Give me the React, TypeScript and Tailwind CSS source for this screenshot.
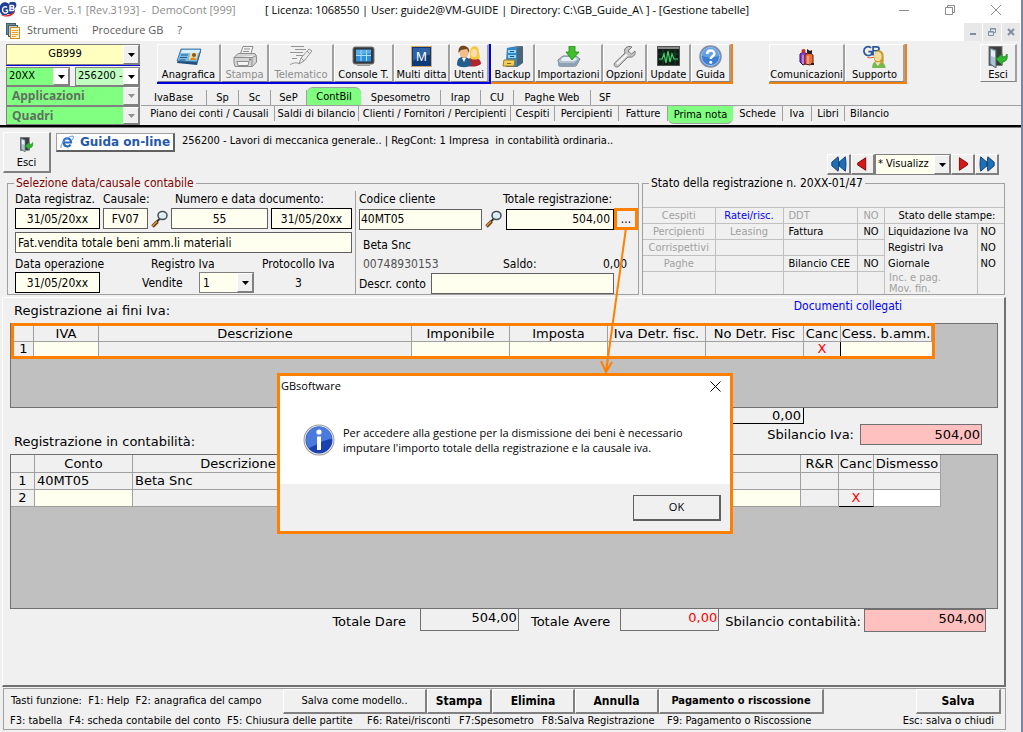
import type { ReactNode } from 'react'
import clsx from 'clsx'

const TAHOMA = "font-['DejaVu_Sans_Condensed','DejaVu_Sans',sans-serif]"
const VERDANA = "font-['DejaVu_Sans',sans-serif]"
const SEGOE = "font-['Open_Sans','Noto_Sans',sans-serif]"

const RAISED = 'border-t border-l border-r-2 border-b-2 border-t-white border-l-white border-r-[#808080] border-b-[#808080] bg-[#f0f0f0]'

/* ---------- icons ---------- */

function GbLogo() {
  return (
    <svg width="17" height="18" viewBox="0 0 17 18" aria-hidden="true">
      <path d="M0 5c1-4 6-5 9-2l1-2h4c3 0 3 5 1 6 1 5-3 7-7 6-4 3-8 0-8-3z" fill="#1f3f94" />
      <path d="M7 6.500C5.500 4.800 2.500 6 2.500 9s3 4 5 2V9.200H5.500M10 9.500V4.500h2.500c2 0 1.500 2.500 0 2.500h-2 2.200c2 0 1.800 2.500 0 2.500z" fill="none" stroke="#fff" strokeWidth="1.400" />
      <path d="M0 13c4 3 11 1 15-3-1 5-10 8-15 3z" fill="#e02020" />
    </svg>
  )
}

function PagesIcon() {
  return (
    <svg width="14" height="16" viewBox="0 0 14 16" aria-hidden="true">
      <rect x="0.500" y="0.500" width="9" height="11" fill="#6f8b92" stroke="#40606a" />
      <rect x="2.500" y="2.500" width="9" height="11" fill="#b8d0d0" stroke="#40606a" />
      <rect x="4.500" y="4.500" width="9" height="11" fill="#fff3d0" stroke="#d08a20" />
      <path d="M6 7.500h6M6 9.500h6M6 11.500h6M6 13.500h4" stroke="#e0a040" />
    </svg>
  )
}

function CardIcon() {
  return (
    <svg width="26" height="22" viewBox="0 0 26 22" aria-hidden="true">
      <path d="M5 5h20l-4 14L1 17z" fill="#1f4f7c" />
      <path d="M5 3h20l-4 13-20-1z" fill="#7fbce4" stroke="#2f6594" strokeWidth="0.800" />
      <path d="M6 4h18l-1 3H5z" fill="#d8f0fc" />
      <path d="M5 9h7M4 11.500h7M3.500 14h6" stroke="#1f5c92" />
      <path d="M14 7h8l-2 7h-7z" fill="#f0dca0" />
      <circle cx="18" cy="9" r="2" fill="#8a5418" />
      <path d="M14 14c0-3 6-3.500 6 0z" fill="#d88a20" />
    </svg>
  )
}

function PrinterIcon() {
  return (
    <svg width="26" height="23" viewBox="0 0 26 23" fill="#f4f4f4" stroke="#8c8c8c" aria-hidden="true">
      <path d="M8 10 11 1.500h10L18.500 10z" />
      <path d="M12 4h6M11 6.500h6" />
      <path d="M2 12.500 6 8.500h17l1.500 3V17l-4 4.500H3L2 18z" fill="#d4d4d4" />
      <path d="M2 12.500h18l4.500-2M20 12.500v8.500" />
      <path d="M5 16.500h12l-1 4H6z" />
      <path d="M17 14.500h2" strokeWidth="2" />
    </svg>
  )
}

function PenIcon() {
  return (
    <svg width="26" height="23" viewBox="0 0 26 23" fill="none" stroke="#949494" aria-hidden="true">
      <path d="M3 1.500h13M7 4.500h11M2 7.500h13M8 10.500h7M4 13.500h5M2 19.500c5-2 6-2 9-1" />
      <path d="m11 19 2-6 8-9 3 2-8 10z" fill="#eee" />
      <path d="M13 13l3 3M19 6l3 3" />
    </svg>
  )
}

function ConsoleIcon() {
  return (
    <svg width="24" height="21" viewBox="0 0 24 21" aria-hidden="true">
      <rect x="1" y="1" width="21" height="17" rx="2" fill="#34393f" stroke="#777" />
      <rect x="4" y="3.500" width="15" height="12" fill="#2f8ed8" />
      <path d="M4 9.500h15M9 4v11M14.500 4v11" stroke="#a8e4ff" />
      <path d="M4 4h15v3L4 9z" fill="#8ccdf5" opacity="0.500" />
      <path d="M5 19.500h13" stroke="#999" />
    </svg>
  )
}

function MultiIcon() {
  return (
    <svg width="22" height="22" viewBox="0 0 22 22" aria-hidden="true">
      <rect x="0.500" y="0.500" width="20" height="20" fill="#0d3a78" stroke="#d8a868" />
      <path d="M2 2h17v7C13 9 7 11 2 15z" fill="#3c74b8" opacity="0.700" />
      <text x="10.500" y="15" textAnchor="middle" fontFamily="Liberation Sans, sans-serif" fontSize="13" fill="#fff">M</text>
    </svg>
  )
}

function UsersIcon() {
  return (
    <svg width="26" height="23" viewBox="0 0 26 23" aria-hidden="true">
      <path d="M12 21c0-8 2-9 5-9s8 2 8 7c-4 3-9 3-13 2z" fill="#b02430" />
      <path d="M14 7c0-7 9-8 9 0l1 6c-3 2-8 2-10 0z" fill="#f0cc40" />
      <ellipse cx="18" cy="8" rx="3" ry="4" fill="#ffdcae" />
      <path d="M1 20c0-6 2-8 6-8s8 1 8 8c-3 3-11 3-14 0z" fill="#235e8e" />
      <ellipse cx="8" cy="8" rx="4.500" ry="5" fill="#f2bd86" />
      <path d="M2.500 8C2 1 6 0 9 1s5 3 4 7l-2-4-6 1z" fill="#74461c" />
      <path d="m6 13 2 4 2-4z" fill="#fff" />
    </svg>
  )
}

function BackupIcon() {
  return (
    <svg width="22" height="22" viewBox="0 0 22 22" aria-hidden="true">
      <path d="M5 2 16 0h4v17l-5 4H4z" fill="#5a7386" />
      <path d="M15 3v18l6-4V0z" fill="#4c6478" />
      <path d="M5 2l10-1v19H4z" fill="#2f88cc" />
      <path d="M6 4h8v3H6zM6 9h8v3H6z" fill="#9ad4f8" />
      <path d="M8 5.500h4M8 10.500h4" stroke="#145484" />
      <path d="M2 14h11l-1 6H1z" fill="#f4cf5c" stroke="#9e7a20" />
      <path d="M5 17.500h4" stroke="#86620e" />
    </svg>
  )
}

function ImportIcon() {
  return (
    <svg width="24" height="22" viewBox="0 0 24 22" aria-hidden="true">
      <path d="m1 14 5-4h13l4 3-4 7H2z" fill="#b5c3d1" stroke="#6e8396" />
      <path d="m4 13 3-2h10l3 2-3 2H5z" fill="#e9eff5" />
      <path d="M1 14v4l2 3h14l5-5v-3l-5 4H3z" fill="#8ea2b4" />
      <path d="M12 0h6v6h4l-7 8-6-8h3z" fill="#3fbf2a" stroke="#268417" strokeWidth="0.800" />
    </svg>
  )
}

function WrenchIcon() {
  return (
    <svg width="24" height="22" viewBox="0 0 24 22" aria-hidden="true">
      <path d="M19 1c-5-2-9 2-7 6L1.500 17c-1.500 3 1.500 5 4 3.500L15 11c5 1 8-2 7-6l-3.500 3-3.500-3z" fill="#c4c4c4" stroke="#7a7a7a" />
      <path d="M4 18 14 8.500" stroke="#fafafa" strokeWidth="2" />
    </svg>
  )
}

function UpdateIcon() {
  return (
    <svg width="24" height="21" viewBox="0 0 24 21" aria-hidden="true">
      <rect x="0.500" y="0.500" width="22" height="19" fill="#101c14" stroke="#555" />
      <path d="M1 2h21" stroke="#888" strokeWidth="2" />
      <path d="M1 8h22M1 14h22M6 3v17M12 3v17M18 3v17" stroke="#1b5230" strokeWidth="0.700" />
      <path d="M2 13h3l2-5 2 9 2-12 2 11 2-8 2 5h4" fill="none" stroke="#43d068" strokeWidth="1.200" />
    </svg>
  )
}

function HelpIcon() {
  return (
    <svg width="23" height="23" viewBox="0 0 24 24" aria-hidden="true">
      <circle cx="12" cy="12" r="11" fill="#3c7fd0" stroke="#868ea0" strokeWidth="1.500" />
      <circle cx="12" cy="12" r="9.500" fill="none" stroke="#a8ccf4" />
      <path d="M3 11a9 8.500 0 0 1 18 0c-5 3-12 3-18 0z" fill="#78aee8" opacity="0.700" />
      <path d="M8.500 9.500c0-5 7.500-5 7.500-.5 0 3-3.700 2.500-3.700 5.500" fill="none" stroke="#fff" strokeWidth="2.600" />
      <circle cx="12.300" cy="18" r="1.600" fill="#fff" />
    </svg>
  )
}

function PeopleIcon() {
  return (
    <svg width="16" height="18" viewBox="0 0 16 18" aria-hidden="true">
      <path d="M1 6c2-2 5-2 7 0v9l-4 2-3-3z" fill="#8a3fd0" stroke="#301050" />
      <path d="M6 7c2-2 6-2 8 0v8l-3 2-5-1z" fill="#f07030" stroke="#601808" />
      <path d="M4 7v9M9 8v8" stroke="#f0c0ff" />
      <circle cx="4.500" cy="3" r="2" fill="#d02828" />
      <path d="M8 5V1l3 2 2-1v4z" fill="#202020" />
      <path d="M12 16h3" stroke="#222" strokeWidth="2" />
    </svg>
  )
}

function SupportIcon() {
  return (
    <svg width="26" height="23" viewBox="0 0 26 24" aria-hidden="true">
      <path d="M9 3C5 0 1 3 1.500 7s5 5 8 3V7H6M11 11V2h4c3 0 3 4 0 4h-4 5" fill="none" stroke="#2b5a9a" strokeWidth="1.800" />
      <path d="M5 13c3 1 7 0 9-1" stroke="#e84820" fill="none" />
      <path d="M10 24c0-5 2-7 6-7s8 2 8 7z" fill="#78b850" />
      <path d="M12 15c-1-12 10-12 10-3v6c-3 3-8 2-10-3z" fill="#c89a30" />
      <ellipse cx="16" cy="12" rx="4" ry="5" fill="#f5dc98" />
      <path d="m13 18 3 4 3-4z" fill="#f3e2b8" />
    </svg>
  )
}

function ExitIcon({ size }: { size: number }) {
  return (
    <svg width={size} height={size} viewBox="0 0 20 22" aria-hidden="true">
      <rect x="1" y="0.500" width="13" height="19" fill="#3c3c3c" stroke="#777" />
      <path d="M2 2 8 4v18l-6-4z" fill="#a8c4d4" stroke="#506068" />
      <path d="M3 4l4 1.500v6L3 10z" fill="#e2eff5" />
      <path d="m8 13 6-5v3c3 0 4-1 5-3 1 5-1 8-5 8v3z" fill="#30b830" stroke="#18801c" strokeWidth="0.800" />
    </svg>
  )
}

function MagnifierIcon() {
  return (
    <svg width="17" height="18" viewBox="0 0 17 18" aria-hidden="true">
      <path d="m1.500 16.500 5-5" stroke="#6a3c10" strokeWidth="3.500" />
      <path d="m1.500 16 5-5" stroke="#d89848" strokeWidth="1.500" />
      <path d="m6 11.500 2.500-2.500" stroke="#333" strokeWidth="2" />
      <ellipse cx="11.500" cy="5.500" rx="4.500" ry="4" fill="#d9ebf3" stroke="#454d52" strokeWidth="1.500" />
      <path d="M9.500 5c0-1.500 1-2 2.500-2" fill="none" stroke="#fff" />
    </svg>
  )
}

function IeIcon() {
  return (
    <svg width="14" height="14" viewBox="0 0 14 14" fill="none" aria-hidden="true">
      <path d="M3.500 7.500h7.500C11 2 4 2 3.500 7c0 5 5.500 5.500 7 2.500" stroke="#2b6cc0" strokeWidth="2.200" />
      <path d="M1 13c-1-4 6-12 12-12 1 1 0 3-1 4" stroke="#5c9ae0" />
    </svg>
  )
}

function InfoIcon() {
  return (
    <svg width="32" height="32" viewBox="0 0 32 32" aria-hidden="true">
      <circle cx="16" cy="16" r="15.500" fill="#9a9a9a" />
      <circle cx="16" cy="16" r="14.500" fill="#ececec" />
      <circle cx="16" cy="16" r="13.500" fill="#1941b0" />
      <path d="M3 16a13 13 0 0 1 26-1c-8 0-17 7-23 9-2-2-3-5-3-8z" fill="#4b7ade" />
      <circle cx="16" cy="8" r="2.600" fill="#fff" />
      <path d="M14 12.500h4V26h-4z" fill="#fff" />
    </svg>
  )
}

const NAV_PATHS = {
  first: 'M9 2c1 5 1 11 0 16l-7-6v-4zM17 2c1 5 1 11 0 16l-7-6v-4z',
  prev: 'M13 3v14l-9-6v-2z',
  next: 'M6 3v14l9-6v-2z',
  last: 'M3 2c-1 5-1 11 0 16l7-6v-4zM11 2c-1 5-1 11 0 16l7-6v-4z',
} as const

function NavButton({ kind, label }: { kind: keyof typeof NAV_PATHS; label: string }) {
  const blue = kind === 'first' || kind === 'last'
  return (
    <button aria-label={label} className={clsx('flex h-[21px] w-6 items-center justify-center', RAISED)}>
      <svg width="20" height="18" viewBox="0 0 20 20" aria-hidden="true">
        <path
          d={NAV_PATHS[kind]}
          fill={blue ? '#1d6fb8' : '#d81818'}
          stroke={blue ? '#0c3560' : '#700808'}
        />
      </svg>
    </button>
  )
}

/* ---------- shared controls ---------- */

function Combo({
  label,
  value,
  className,
  arrowClass = 'bg-[#f0f0f0] text-black',
  selectClass,
}: {
  label: string
  value: string
  className?: string
  arrowClass?: string
  selectClass?: string
}) {
  return (
    <div className={clsx('flex border border-[#808080]', className)}>
      <select
        aria-label={label}
        defaultValue={value}
        className={clsx('min-w-0 flex-1 appearance-none overflow-hidden bg-transparent outline-none', selectClass)}
      >
        <option>{value}</option>
      </select>
      <span
        className={clsx(
          'pointer-events-none flex w-4 flex-none items-center justify-center border-t border-l border-r border-b border-t-white border-l-white border-r-[#808080] border-b-[#808080]',
          arrowClass
        )}
      >
        <svg width="7" height="4" viewBox="0 0 7 4" fill="currentColor" aria-hidden="true">
          <path d="M0 0h7L3.500 4z" />
        </svg>
      </span>
    </div>
  )
}

function Field({ label, value, className }: { label: string; value: string; className?: string }) {
  return (
    <input
      aria-label={label}
      defaultValue={value}
      className={clsx('h-[21px] min-w-0 border px-[2px] outline-none', className)}
    />
  )
}

function ToolButton({
  icon,
  label,
  width,
  disabled,
}: {
  icon: ReactNode
  label: string
  width: string
  disabled?: boolean
}) {
  return (
    <button
      disabled={disabled}
      className={clsx(
        'flex h-[38px] flex-none flex-col items-center justify-between border-t border-r-2 border-b border-l border-t-white border-l-white border-r-[#a0a0a0] border-b-[#808080] whitespace-nowrap',
        width,
        disabled && 'text-[#8c8c8c]'
      )}
    >
      <span className="flex h-[23px] items-center">{icon}</span>
      <span className="leading-[13px]">{label}</span>
    </button>
  )
}

function Tab({ label, width, active }: { label: string; width: string; active?: 'top' | 'bottom' }) {
  return (
    <button
      className={clsx(
        'flex flex-none items-center justify-center whitespace-nowrap',
        width,
        active ? 'h-[18px] bg-[#80ff80]' : 'h-[15px] border-r border-[#a0a0a0] pt-px',
        active === 'top' && 'rounded-t-md border-t border-[#a0a0a0] pt-px',
        active === 'bottom' && 'rounded-b-md border-b border-[#a0a0a0] pt-px'
      )}
    >
      {label}
    </button>
  )
}

/* ---------- window chrome ---------- */

function TitleBar() {
  return (
    <header className={clsx('bg-white text-[11px] text-[#8c8c8c]', SEGOE)}>
      <div className="flex h-5 items-center">
        <GbLogo />
        <span className="ml-[3px] w-[245px] whitespace-nowrap">GB - Ver. 5.1 [Rev.3193] -&nbsp; DemoCont [999]</span>
        <span className="whitespace-nowrap text-black">
          [ Licenza: 1068550 | User: guide2@VM-GUIDE | Directory: C:\GB_Guide_A\ ] - [Gestione tabelle]
        </span>
        <div className="mr-5 ml-auto flex items-center gap-9 text-[#8c8c8c]">
          <button aria-label="Riduci a icona">
            <svg width="10" height="10" viewBox="0 0 10 10" stroke="currentColor"><path d="M0 5.500h10" /></svg>
          </button>
          <button aria-label="Ripristina">
            <svg width="10" height="10" viewBox="0 0 10 10" fill="none" stroke="currentColor">
              <path d="M0.500 2.500h7v7h-7zM2.500 2V0.500h7v7H8" />
            </svg>
          </button>
          <button aria-label="Chiudi">
            <svg width="10" height="10" viewBox="0 0 10 10" stroke="currentColor"><path d="m0 0 10 10M10 0 0 10" /></svg>
          </button>
        </div>
      </div>
      <nav className="flex h-[21px] items-center pl-[6px] text-[#5a5a5a]">
        <PagesIcon />
        <button className="ml-[7px]">Strumenti</button>
        <button className="ml-[14px]">Procedure GB</button>
        <button className="ml-[14px]">?</button>
        <div className="mr-px ml-auto flex gap-px self-end text-[#7f8fa3]">
          <button aria-label="Riduci scheda" className="flex h-[18px] w-[18px] items-center justify-center bg-[#e8e8e8]">
            <svg width="8" height="8" viewBox="0 0 8 8"><path d="M1 6h6" stroke="currentColor" strokeWidth="2" /></svg>
          </button>
          <button aria-label="Ripristina scheda" className="flex h-[18px] w-[18px] items-center justify-center bg-[#e8e8e8]">
            <svg width="8" height="8" viewBox="0 0 8 8" fill="none" stroke="currentColor">
              <path d="M0.500 3.500h5v4h-5zM2.500 3V0.500h5v4H6M2 1h6M0 4h6" />
            </svg>
          </button>
          <button aria-label="Chiudi scheda" className="flex h-[18px] w-[18px] items-center justify-center bg-[#e8e8e8]">
            <svg width="8" height="8" viewBox="0 0 8 8"><path d="m1 1 6 6M7 1 1 7" stroke="currentColor" strokeWidth="2" /></svg>
          </button>
        </div>
      </nav>
    </header>
  )
}

function Toolbar() {
  return (
    <div className="flex h-[86px] border-b-2 border-black bg-[#f0f0f0] text-[11px]">
      <div className="flex w-[141px] flex-none flex-col pt-[3px] pl-[6px]">
        <Combo label="Ditta" value="GB999" className="h-[21px] w-[134px] bg-[#ffffc0]" selectClass="text-center" />
        <div className="mb-px h-px w-[134px] bg-[#0000e0]" />
        <div className="flex h-[19px] gap-[5px]">
          <Combo label="Anno" value="20XX" className="w-[64px] bg-[#80ff80]" arrowClass="bg-white text-black" selectClass="pl-[2px]" />
          <Combo label="Codice" value="256200 -" className="w-[65px] bg-[#c0ffc0]" arrowClass="bg-white text-black" selectClass="pl-[2px]" />
        </div>
        <Combo
          label="Applicazioni"
          value="Applicazioni"
          className={clsx('h-[20px] w-[134px] bg-[#80ff80] text-[12px] font-bold text-[#607060]', SEGOE)}
          arrowClass="bg-[#f0f0f0] text-[#909090]"
          selectClass="pl-[5px] leading-4"
        />
        <Combo
          label="Quadri"
          value="Quadri"
          className={clsx('h-[19px] w-[134px] bg-[#80ff80] text-[12px] font-bold text-[#607060]', SEGOE)}
          arrowClass="bg-[#f0f0f0] text-[#909090]"
          selectClass="pl-[5px] leading-4"
        />
      </div>

      <div className="flex min-w-0 flex-1 flex-col">
        <div className="flex h-[46px] items-start pt-[3px] pl-4">
          <div className="flex border-r-2 border-b-2 border-[#0000e0]">
            <ToolButton icon={<CardIcon />} label="Anagrafica" width="w-[64px]" />
            <ToolButton icon={<PrinterIcon />} label="Stampa" width="w-[48px]" disabled />
            <ToolButton icon={<PenIcon />} label="Telematico" width="w-[65px]" disabled />
            <ToolButton icon={<ConsoleIcon />} label="Console T." width="w-[60px]" />
            <ToolButton icon={<MultiIcon />} label="Multi ditta" width="w-[56px]" />
            <ToolButton icon={<UsersIcon />} label="Utenti" width="w-[39px]" />
          </div>
          <div className="flex border-r-2 border-b-2 border-[#f08010]">
            <ToolButton icon={<BackupIcon />} label="Backup" width="w-[44px]" />
            <ToolButton icon={<ImportIcon />} label="Importazioni" width="w-[68px]" />
            <ToolButton icon={<WrenchIcon />} label="Opzioni" width="w-[44px]" />
            <ToolButton icon={<UpdateIcon />} label="Update" width="w-[44px]" />
            <ToolButton icon={<HelpIcon />} label="Guida" width="w-[40px]" />
          </div>
          <div className="ml-9 flex border-r-2 border-b-2 border-[#f08010]">
            <ToolButton icon={<PeopleIcon />} label="Comunicazioni" width="w-[76px]" />
            <ToolButton icon={<SupportIcon />} label="Supporto" width="w-[60px]" />
          </div>
          <div className="mr-[4px] ml-auto">
            <ToolButton icon={<ExitIcon size={22} />} label="Esci" width="w-[37px]" />
          </div>
        </div>

        <nav className="flex h-[19px] items-end border-b border-[#a0a0a0]">
          <Tab label="IvaBase" width="w-[66px]" />
          <Tab label="Sp" width="w-[32px]" />
          <Tab label="Sc" width="w-[32px]" />
          <Tab label="SeP" width="w-[36px]" />
          <Tab label="ContBil" width="w-[54px]" active="top" />
          <Tab label="Spesometro" width="w-[80px]" />
          <Tab label="Irap" width="w-[40px]" />
          <Tab label="CU" width="w-[33px]" />
          <Tab label="Paghe Web" width="w-[77px]" />
          <button className="h-[15px] w-7 leading-4">SF</button>
        </nav>
        <nav className="flex h-[19px] items-start pl-1">
          <Tab label="Piano dei conti / Causali" width="w-[130px]" />
          <Tab label="Saldi di bilancio" width="w-[84px]" />
          <Tab label="Clienti / Fornitori / Percipienti" width="w-[152px]" />
          <Tab label="Cespiti" width="w-[44px]" />
          <Tab label="Percipienti" width="w-[64px]" />
          <Tab label="Fatture" width="w-[49px]" />
          <Tab label="Prima nota" width="w-[65px]" active="bottom" />
          <Tab label="Schede" width="w-[50px]" />
          <Tab label="Iva" width="w-[29px]" />
          <Tab label="Libri" width="w-[33px]" />
          <button className="h-[15px] w-[49px] leading-4">Bilancio</button>
        </nav>
      </div>
    </div>
  )
}

function ContextBar() {
  return (
    <div className="flex h-[47px] items-start pt-[4px] pl-[3px] text-[11px]">
      <button className={clsx('flex h-[41px] w-12 flex-col items-center justify-between pt-[4px]', RAISED)}>
        <ExitIcon size={15} />
        <span className="leading-4">Esci</span>
      </button>
      <button className="mt-px ml-[5px] flex h-[19px] w-[119px] items-center justify-center gap-[6px] border-t border-r-2 border-b-2 border-l border-[#606060] border-t-[#a0a0a0] border-l-[#a0a0a0] bg-white">
        <IeIcon />
        <span className={clsx('text-[12px] font-bold text-[#2458a8]', VERDANA)}>Guida on-line</span>
      </button>
      <span className="ml-[7px] leading-[18px] whitespace-nowrap">
        256200 - Lavori di meccanica generale.. | RegCont: 1 Impresa&nbsp; in contabilità ordinaria..
      </span>
      <div className="mr-[22px] ml-auto flex self-end">
        <NavButton kind="first" label="Prima registrazione" />
        <NavButton kind="prev" label="Registrazione precedente" />
        <Combo label="Visualizza" value="* Visualizz" className="h-[21px] w-[76px] bg-[#fffff0]" selectClass="pl-[2px]" />
        <NavButton kind="next" label="Registrazione successiva" />
        <NavButton kind="last" label="Ultima registrazione" />
      </div>
    </div>
  )
}

/* ---------- registration header ---------- */

const CREAM = 'bg-[#fffff0] border-[#606060]'
const CREAM_DARK = 'bg-[#fffff0] border-black'

function SelectionBox() {
  return (
    <fieldset className="w-[631px] flex-none border border-[#a0a0a0]">
      <legend className="ml-[6px] px-[2px] leading-4 text-[#800000]">Selezione data/causale contabile</legend>
      <div className="flex h-[103px]">
        <div className="w-[347px] flex-none pl-[7px]">
          <div className="grid grid-cols-[85px_45px_17px_97px_81px] gap-x-[3px] whitespace-nowrap">
            <span className="h-[17px] leading-4">Data registraz.</span>
            <span className="col-span-2 h-[17px] leading-4">Causale:</span>
            <span className="col-span-2 h-[17px] pl-1 leading-4">Numero e data documento:</span>
            <Field label="Data registrazione" value="31/05/20xx" className={clsx('text-center', CREAM_DARK)} />
            <Field label="Causale" value="FV07" className={clsx('text-center', CREAM)} />
            <button aria-label="Cerca causale" className="self-center"><MagnifierIcon /></button>
            <Field label="Numero documento" value="55" className={clsx('text-center', CREAM)} />
            <Field label="Data documento" value="31/05/20xx" className={clsx('text-center', CREAM_DARK)} />
          </div>
          <Field label="Descrizione causale" value="Fat.vendita totale beni amm.li materiali" className={clsx('mt-[3px] block w-[337px]', CREAM)} />
          <div className="mt-[3px] flex h-4 leading-4 whitespace-nowrap">
            <label htmlFor="data-op" className="w-[136px]">Data operazione</label>
            <span className="w-[111px]">Registro Iva</span>
            <span>Protocollo Iva</span>
          </div>
          <div className="flex items-center">
            <input id="data-op" defaultValue="31/05/20xx" className={clsx('h-[21px] w-[85px] border text-center', CREAM_DARK)} />
            <span className="ml-[42px] w-[57px]">Vendite</span>
            <Combo label="Registro Iva" value="1" className="h-[21px] w-[55px] bg-[#fffff0]" selectClass="pl-[3px]" />
            <span className="ml-[41px]">3</span>
          </div>
        </div>

        <div className="flex-1 border-l border-[#a0a0a0] pl-[3px]">
          <div className="flex h-[17px] leading-4 whitespace-nowrap">
            <label htmlFor="cliente" className="w-[144px]">Codice cliente</label>
            <label htmlFor="totale">Totale registrazione:</label>
          </div>
          <div className="flex items-center">
            <input id="cliente" defaultValue="40MT05" className={clsx('h-[21px] w-[123px] border px-px', CREAM)} />
            <button aria-label="Cerca cliente" className="mx-[3px] w-[18px]"><MagnifierIcon /></button>
            <input id="totale" defaultValue="504,00" className={clsx('h-[21px] w-[108px] border px-[3px] text-right', CREAM_DARK)} />
            <button aria-label="Dettagli totale" className="h-[22px] w-6 border-3 border-[#ff8000] leading-3">...</button>
          </div>
          <div className="mt-[6px] pl-1 leading-[19px]">Beta Snc</div>
          <div className="flex h-[18px] pr-[11px] pl-1 leading-[18px]">
            <span className="w-[140px] text-[#505050]">00748930153</span>
            <span>Saldo:</span>
            <span className="ml-auto">0,00</span>
          </div>
          <div className="flex items-center">
            <label htmlFor="descr" className="w-[72px] whitespace-nowrap">Descr. conto</label>
            <input id="descr" className={clsx('h-[21px] w-[183px] border', CREAM)} />
          </div>
        </div>
      </div>
    </fieldset>
  )
}

const STATUS_ROWS = [
  ['Cespiti', 'Ratei/risc.', 'DDT', 'NO'],
  ['Percipienti', 'Leasing', 'Fattura', 'NO'],
  ['Corrispettivi', '', '', ''],
  ['Paghe', '', 'Bilancio CEE', 'NO'],
  ['', '', '', ''],
]

function StatusBox() {
  return (
    <fieldset className="min-w-0 flex-1 border border-[#a0a0a0]">
      <legend className="ml-[6px] px-[2px] leading-4">Stato della registrazione n. 20XX-01/47</legend>
      <div className="flex h-[103px] pt-[16px] text-[11px]">
        <table className="h-[87px] flex-1 table-fixed border-collapse leading-[14px] whitespace-nowrap text-[#a0a0a0]">
          <colgroup>
            <col className="w-[72px]" />
            <col className="w-[68px]" />
            <col />
            <col className="w-[27px]" />
          </colgroup>
          <tbody>
            {STATUS_ROWS.map((row, r) => (
              <tr key={r} className={clsx('border-t border-[#c0c0c0]', r < 4 ? 'h-4' : 'h-[22px]')}>
                {row.map((cell, c) => (
                  <td
                    key={c}
                    className={clsx(
                      'border-r border-[#c0c0c0] p-0',
                      c === 2 ? 'pl-[5px] text-left' : 'text-center',
                      c > 1 && (r === 1 || r === 3) && 'text-black',
                      cell === 'Ratei/risc.' && 'text-[#0000ff]'
                    )}
                  >
                    {cell}
                  </td>
                ))}
              </tr>
            ))}
          </tbody>
        </table>
        <table className="h-[87px] w-[119px] flex-none table-fixed border-collapse leading-[14px] whitespace-nowrap">
          <colgroup>
            <col className="w-[92px]" />
            <col />
          </colgroup>
          <tbody>
            <tr className="h-4 border-y border-[#c0c0c0]"><th colSpan={2} className="p-0 pl-[5px] font-normal">Stato delle stampe:</th></tr>
            {['Liquidazione Iva', 'Registri Iva', 'Giornale'].map((name) => (
              <tr key={name} className="h-4">
                <td className="border-r border-[#c0c0c0] p-0 pl-[3px]">{name}</td>
                <td className="p-0 pl-[3px]">NO</td>
              </tr>
            ))}
            {['Inc. e pag.', 'Mov. fin.'].map((name) => (
              <tr key={name} className="h-[11px] leading-[11px] text-[#a0a0a0]">
                <td className="border-r border-[#c0c0c0] p-0 pl-1">{name}</td>
                <td className="p-0" />
              </tr>
            ))}
          </tbody>
        </table>
      </div>
    </fieldset>
  )
}

/* ---------- grids ---------- */

const TH = 'border-r border-b border-[#a0a0a0] p-0 font-normal'
const TD = 'border-r border-b border-[#a0a0a0] p-0'
const IVA_TD = 'border-r border-[#a0a0a0] p-0'

function IvaGrid() {
  return (
    <div className="h-[85px] border border-[#707070] bg-[#c0c0c0]">
      <div className="-mt-px w-[924px] max-w-full border-3 border-[#ff8000] bg-[#f0f0f0]">
        <table className="w-full table-fixed border-separate border-spacing-0 leading-[14px] whitespace-nowrap">
          <colgroup>
            <col className="w-5" />
            <col className="w-[65px]" />
            <col />
            <col className="w-[98px]" />
            <col className="w-[98px]" />
            <col className="w-[98px]" />
            <col className="w-[98px]" />
            <col className="w-[37px]" />
            <col className="w-[91px]" />
          </colgroup>
          <thead>
            <tr className="h-4">
              {['', 'IVA', 'Descrizione', 'Imponibile', 'Imposta', 'Iva Detr. fisc.', 'No Detr. Fisc', 'Canc', 'Cess. b.amm.'].map((h, i) => (
                <th key={i} className={clsx(TH, 'pt-px')}>{h}</th>
              ))}
            </tr>
          </thead>
          <tbody>
            <tr className="h-[14px]">
              <td className={clsx(IVA_TD, 'text-center')}>1</td>
              <td className={clsx(IVA_TD, 'bg-[#fffff0]')} />
              <td className={IVA_TD} />
              <td className={clsx(IVA_TD, 'bg-[#fffff0]')} />
              <td className={clsx(IVA_TD, 'bg-[#fffff0]')} />
              <td className={IVA_TD} />
              <td className={IVA_TD} />
              <td className="border-r border-black p-0 text-center">
                <button className="block w-full leading-[14px] text-[#ff0000]">X</button>
              </td>
              <td className="bg-[#fffff0] p-0" />
            </tr>
          </tbody>
        </table>
      </div>
    </div>
  )
}

function AccountGrid() {
  return (
    <div className="h-[155px] border border-[#707070] bg-[#c0c0c0]">
      <table className="w-[930px] max-w-full table-fixed border-separate border-spacing-0 bg-[#f0f0f0] leading-4 whitespace-nowrap">
        <colgroup>
          <col className="w-6" />
          <col className="w-[98px]" />
          <col className="w-[211px]" />
          <col />
          <col className="w-[98px]" />
          <col className="w-[38px]" />
          <col className="w-[35px]" />
          <col className="w-[67px]" />
        </colgroup>
        <thead>
          <tr className="h-[17px]">
            {['', 'Conto', 'Descrizione', '', '', 'R&R', 'Canc', 'Dismesso'].map((h, i) => (
              <th key={i} className={clsx(TH, 'leading-[17px]')}>{h}</th>
            ))}
          </tr>
        </thead>
        <tbody>
          <tr className="h-[17px]">
            <td className={clsx(TD, 'text-center')}>1</td>
            <td className={clsx(TD, 'pl-[2px]')}>40MT05</td>
            <td className={clsx(TD, 'pl-[2px]')}>Beta Snc</td>
            <td className={TD} />
            <td className={TD} />
            <td className={TD} />
            <td className={TD} />
            <td className={TD} />
          </tr>
          <tr className="h-[17px]">
            <td className={clsx(TD, 'text-center')}>2</td>
            <td className={clsx(TD, 'bg-[#fffff0]')} />
            <td className={TD} />
            <td className={TD} />
            <td className={clsx(TD, 'bg-[#fffff0]')} />
            <td className={TD} />
            <td className="border-r border-b border-r-[#a0a0a0] border-b-black p-0">
              <button className="block w-full text-[#ff0000]">X</button>
            </td>
            <td className={clsx(TD, 'bg-white')} />
          </tr>
        </tbody>
      </table>
    </div>
  )
}

function RegistrationPanel() {
  return (
    <section
      className={clsx(
        'mt-[2px] ml-[2px] flex-1 border-t border-r-2 border-b-2 border-l border-t-white border-r-[#707070] border-b-[#707070] border-l-white pr-[6px] pl-[7px] text-[13px]',
        VERDANA
      )}
    >
      <div className="flex h-[25px] justify-between pr-24 pl-1">
        <h2 className="leading-[26px]">Registrazione ai fini Iva:</h2>
        <a href="#documenti" className={clsx('text-[12px] leading-4 text-[#0000ff]', TAHOMA)}>Documenti collegati</a>
      </div>
      <IvaGrid />
      <div className="flex h-[46px] justify-between pl-1">
        <h2 className="self-end leading-6">Registrazione in contabilità:</h2>
        <div className="w-[293px] flex-none">
          <div className="h-4 w-[99px] border-r border-b border-black pr-[2px] text-right leading-[15px]">0,00</div>
          <div className="flex items-center justify-end gap-[6px] pr-4">
            <label htmlFor="sb-iva">Sbilancio Iva:</label>
            <input id="sb-iva" readOnly defaultValue="504,00" className="h-[21px] w-[122px] border border-[#707070] bg-[#ffc0c0] px-px text-right" />
          </div>
        </div>
      </div>
      <AccountGrid />
      <div className="flex justify-end pr-3 whitespace-nowrap">
        <label htmlFor="dare" className="mr-[14px] leading-[26px]">Totale Dare</label>
        <input id="dare" readOnly defaultValue="504,00" className="mr-3 h-[22px] w-[99px] border border-t-0 border-[#707070] px-px pb-1 text-right" />
        <label htmlFor="avere" className="mr-[10px] leading-[26px]">Totale Avere</label>
        <input id="avere" readOnly defaultValue="0,00" className="mr-[6px] h-[22px] w-[99px] border border-t-0 border-[#707070] px-px pb-1 text-right text-[#ff0000]" />
        <label htmlFor="sb-cont" className="mr-[3px] leading-[26px]">Sbilancio contabilità:</label>
        <input id="sb-cont" readOnly defaultValue="504,00" className="h-[23px] w-[122px] border border-[#707070] bg-[#ffc0c0] px-px pb-1 text-right" />
      </div>
    </section>
  )
}

function FunctionKeys() {
  return (
    <footer className="mt-px mb-[2px] ml-[3px] border border-[#a0a0a0] text-[11px] whitespace-nowrap">
      <div className="flex items-center pr-1 pl-[7px]">
        <span className="w-[272px]">Tasti funzione:&nbsp; F1: Help&nbsp; F2: anagrafica del campo</span>
        <button className={clsx('h-[25px] w-[144px]', RAISED)}>Salva come modello..</button>
        <div className="flex text-[12px] font-bold">
          <button className={clsx('h-[25px] w-[65px]', RAISED)}>Stampa</button>
          <button className={clsx('h-[25px] w-[83px]', RAISED)}>Elimina</button>
          <button className={clsx('h-[25px] w-[84px]', RAISED)}>Annulla</button>
          <button className={clsx('h-[25px] w-[165px] text-[11px]', RAISED)}>Pagamento o riscossione</button>
        </div>
        <button className={clsx('ml-auto h-[25px] w-[85px] text-[12px] font-bold', RAISED)}>Salva</button>
      </div>
      <div className="flex h-[15px] items-center pr-[11px] pl-[6px]">
        <span className="w-[59px]">F3: tabella</span>
        <span className="w-[158px]">F4: scheda contabile del conto</span>
        <span className="w-[140px]">F5: Chiusura delle partite</span>
        <span className="w-[92px]">F6: Ratei/risconti</span>
        <span className="w-[83px]">F7:Spesometro</span>
        <span className="w-[125px]">F8:Salva Registrazione</span>
        <span>F9: Pagamento o Riscossione</span>
        <span className="ml-auto">Esc: salva o chiudi</span>
      </div>
    </footer>
  )
}

/* ---------- message box ---------- */

function MessageBox() {
  return (
    <div
      role="dialog"
      aria-label="GBsoftware"
      className={clsx('absolute top-[373px] left-[277px] w-[456px] border-3 border-[#ff8000] bg-white text-[11px]', SEGOE)}
    >
      <div className="flex h-5 items-center justify-between pr-[9px] pl-px">
        <span>GBsoftware</span>
        <button aria-label="Chiudi messaggio">
          <svg width="11" height="11" viewBox="0 0 11 11" stroke="#000"><path d="m0.500 0.500 10 10M10.500 0.500l-10 10" /></svg>
        </button>
      </div>
      <div className="flex h-[88px] items-center gap-[8px] pl-[23px]">
        <InfoIcon />
        <p className="leading-[15px]">
          Per accedere alla gestione per la dismissione dei beni è necessario
          <br />
          imputare l'importo totale della registrazione e la causale iva.
        </p>
      </div>
      <div className="flex h-[47px] items-center justify-end bg-[#f0f0f0] pr-[9px]">
        <button className="h-[26px] w-[88px] border-2 border-t border-l border-[#606060]">OK</button>
      </div>
    </div>
  )
}

export default function App() {
  return (
    <div className={clsx('relative flex min-h-screen flex-col overflow-hidden border-r-2 border-[#7888a8] bg-[#f0f0f0] text-black', TAHOMA)}>
      <TitleBar />
      <Toolbar />
      <main className="flex flex-1 flex-col border-t border-[#808080]">
        <ContextBar />
        <div className="mr-[16px] ml-[7px] flex gap-[3px] text-[12px]">
          <SelectionBox />
          <StatusBox />
        </div>
        <div className="mr-[15px] flex flex-1 flex-col">
          <RegistrationPanel />
          <FunctionKeys />
        </div>
      </main>

      {/* Callout from the total's button to the message */}
      <svg className="pointer-events-none absolute top-[228px] left-[596px]" width="36" height="146" viewBox="0 0 36 146" fill="none" stroke="#ff8000" strokeWidth="2" aria-hidden="true">
        <path d="M30 0 10 144M5 133l5 11 6-10" />
      </svg>
      <MessageBox />
    </div>
  )
}
